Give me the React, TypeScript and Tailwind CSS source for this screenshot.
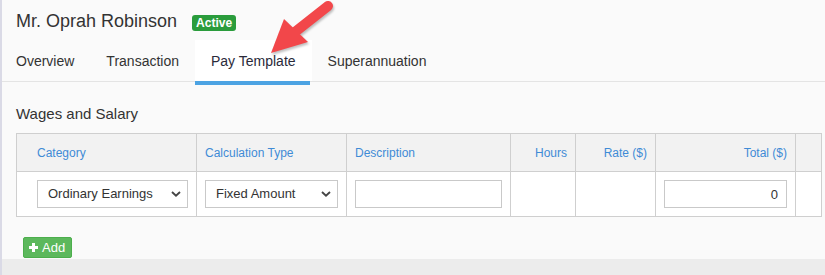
import { useState } from 'react';

const TABS = ['Overview', 'Transaction', 'Pay Template', 'Superannuation'];
const COLS = 'grid grid-cols-[180px_150px_164px_65px_80px_140px_26px]';

const HEADERS = [
  { label: 'Category', className: 'pl-[20px]' },
  { label: 'Calculation Type', className: 'pl-[8px]' },
  { label: 'Description', className: 'pl-[8px]' },
  { label: 'Hours', className: 'justify-end pr-[8px]' },
  { label: 'Rate ($)', className: 'justify-end pr-[8px]' },
  { label: 'Total ($)', className: 'justify-end pr-[8px]' },
  { label: '', className: '' },
];

function Chevron() {
  return (
    <svg
      width="10"
      height="6"
      viewBox="0 0 10 6"
      className="pointer-events-none absolute right-[7px] top-1/2 -translate-y-1/2"
    >
      <path d="M1 1l4 3.6L9 1" fill="none" stroke="#444" strokeWidth="1.9" />
    </svg>
  );
}

function Select({ value, options, className }: { value: string; options: string[]; className: string }) {
  const [v, setV] = useState(value);
  return (
    <div className={`relative ${className}`}>
      <select
        value={v}
        onChange={(e) => setV(e.target.value)}
        className="h-[28px] w-full appearance-none border border-[#c9c9c9] bg-white pl-[10px] text-[13px] text-[#333] outline-none"
      >
        {options.map((o) => (
          <option key={o}>{o}</option>
        ))}
      </select>
      <Chevron />
    </div>
  );
}

export default function App() {
  return (
    <div className="relative flex h-[275px] w-[825px] overflow-hidden bg-[#fafafa] font-['Liberation_Sans',Arial,sans-serif] text-[#333]">
      {/* left rail */}
      <div className="w-[2px] shrink-0 bg-[#dadae6]" />

      <div className="flex min-w-0 flex-1 flex-col">
        {/* title */}
        <div className="flex h-[40px] items-center pl-[14px] pt-[2px]">
          <h1 className="text-[18px] leading-[22px]">Mr. Oprah Robinson</h1>
          <span className="ml-[15px] mt-[4px] rounded-[3px] bg-[#2a9c3c] px-[4px] text-[12px] font-bold leading-[16px] text-white">
            Active
          </span>
        </div>

        {/* tabs */}
        <div className="flex border-b border-[#e4e4e4]">
          {TABS.map((t, i) => {
            const active = t === 'Pay Template';
            return (
              <div
                key={t}
                className={`relative flex h-[41px] items-center pt-[2px] text-[14px] ${i === 0 ? 'pl-[14px] pr-4' : 'px-4'} ${
                  active ? 'bg-white text-[#2a2a3a]' : ''
                }`}
              >
                {t}
                {active && <span className="absolute -bottom-[4px] left-0 right-[2px] h-[4px] bg-[#4ca3e3]" />}
              </div>
            );
          })}
        </div>

        {/* wages and salary */}
        <div className="px-[14px] pt-[23px]">
          <h2 className="mb-[10px] text-[15px] leading-[18px]">Wages and Salary</h2>

          <div className={`${COLS} w-[806px] border-l border-t border-[#cfcfcf]`}>
            {HEADERS.map((h, i) => (
              <div
                key={i}
                className={`flex h-[38px] items-center border-b border-r border-[#cfcfcf] bg-[#f2f2f2] text-[12px] text-[#3f8bd6] ${h.className}`}
              >
                {h.label}
              </div>
            ))}

            <div className="flex h-[45px] items-center border-b border-r border-[#cfcfcf] bg-white pl-[20px]">
              <Select
                value="Ordinary Earnings"
                options={['Ordinary Earnings', 'Overtime', 'Allowance']}
                className="w-[151px]"
              />
            </div>
            <div className="flex h-[45px] items-center border-b border-r border-[#cfcfcf] bg-white pl-[8px]">
              <Select value="Fixed Amount" options={['Fixed Amount', 'Hourly Rate']} className="w-[133px]" />
            </div>
            <div className="flex h-[45px] items-center border-b border-r border-[#cfcfcf] bg-white pl-[8px]">
              <input className="h-[28px] w-[147px] border border-[#c9c9c9] bg-white px-2 text-[13px] outline-none" />
            </div>
            <div className="h-[45px] border-b border-r border-[#cfcfcf] bg-white" />
            <div className="h-[45px] border-b border-r border-[#cfcfcf] bg-white" />
            <div className="flex h-[45px] items-center border-b border-r border-[#cfcfcf] bg-white pl-[8px]">
              <input
                defaultValue="0"
                className="h-[28px] w-[123px] border border-[#c9c9c9] bg-white pr-[8px] text-right text-[13px] text-[#333] outline-none"
              />
            </div>
            <div className="h-[45px] border-b border-r border-[#cfcfcf] bg-white" />
          </div>

          <button className="ml-[7px] mt-[20px] flex h-[21px] items-center gap-[4px] rounded-[2px] border border-[#4cae4c] bg-[#5cb85c] pl-[5px] pr-[6px] text-[13px] text-white">
            <svg width="9" height="9" viewBox="0 0 9 9">
              <rect x="3" y="0" width="3" height="9" fill="white" />
              <rect x="0" y="3" width="9" height="3" fill="white" />
            </svg>
            Add
          </button>
        </div>

        {/* bottom band */}
        <div className="mt-[1px] flex-1 bg-[#ececec]" />
      </div>

      {/* annotation arrow */}
      <svg
        width="825"
        height="70"
        viewBox="0 0 825 70"
        className="pointer-events-none absolute left-0 top-0 drop-shadow-[1px_2px_1px_rgba(0,0,0,0.25)]"
      >
        <line x1="295" y1="32" x2="328" y2="6" stroke="#f2474a" strokeWidth="10" strokeLinecap="round" />
        <polygon points="271,53 284,19 308,42" fill="#f2474a" />
      </svg>
    </div>
  );
}
